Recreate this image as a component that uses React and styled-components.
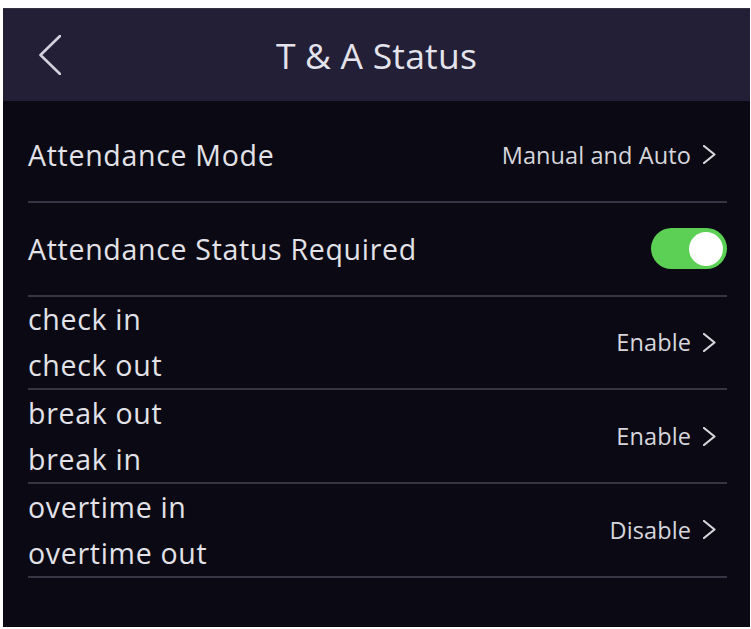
import React from "react";
import styled, { createGlobalStyle } from "styled-components";

const GlobalStyle = createGlobalStyle`
  html, body {
    margin: 0;
    padding: 0;
    background: #ffffff;
  }
  body {
    font-family: "Open Sans", "Noto Sans", sans-serif;
  }
`;

const Screen = styled.div`
  margin: 8px 1px 0 3px;
  width: 747px;
  height: 619px;
  background: #0b0a14;
  display: flex;
  flex-direction: column;
  overflow: hidden;
`;

const Header = styled.div`
  height: 93px;
  flex-shrink: 0;
  background: #221f36;
  border-top: 1px solid #34323f;
  box-sizing: border-box;
  display: grid;
  grid-template-columns: 1fr auto 1fr;
  align-items: center;
`;

const BackButton = styled.button`
  justify-self: start;
  margin-left: 36px;
  padding: 0;
  border: none;
  background: none;
  display: flex;
  cursor: pointer;
`;

const Title = styled.h1`
  margin: 0;
  font-size: 35.5px;
  font-weight: 400;
  color: #e4e3ec;
  letter-spacing: 0.2px;
`;

const List = styled.div`
  padding: 8px 23px 0 25px;
  display: flex;
  flex-direction: column;
`;

const Row = styled.div`
  height: 91.75px;
  border-bottom: 2px solid #363543;
  display: flex;
  align-items: center;
  justify-content: space-between;
`;

const Labels = styled.div`
  display: flex;
  flex-direction: column;
`;

const Label = styled.span`
  font-size: 28.5px;
  line-height: 46px;
  letter-spacing: 0.7px;
  color: #e2e2e8;
`;

const Value = styled.button`
  display: flex;
  align-items: center;
  gap: 12px;
  margin-right: 11px;
  padding: 0;
  border: none;
  background: none;
  font-family: inherit;
  font-size: 23.5px;
  letter-spacing: 0.1px;
  color: #d6d6dc;
  cursor: pointer;
`;

const Switch = styled.div`
  width: 76px;
  height: 41px;
  border-radius: 21px;
  background: ${(p) => (p.on ? "#5ccf55" : "#55545f")};
  display: flex;
  align-items: center;
  justify-content: ${(p) => (p.on ? "flex-end" : "flex-start")};
  padding: 0 4px;
  box-sizing: border-box;
`;

const Knob = styled.div`
  width: 34px;
  height: 34px;
  border-radius: 50%;
  background: #ffffff;
`;

const Chevron = ({ left, w, h, sw, color }) => (
  <svg width={w} height={h} viewBox={`0 0 ${w} ${h}`} fill="none">
    <path
      d={
        left
          ? `M${w - 1} 1 L1.5 ${h / 2} L${w - 1} ${h - 1}`
          : `M1 1 L${w - 1.5} ${h / 2} L1 ${h - 1}`
      }
      stroke={color}
      strokeWidth={sw}
      strokeLinecap="round"
      strokeLinejoin="round"
    />
  </svg>
);

const rows = [
  { labels: ["Attendance Mode"], value: "Manual and Auto" },
  { labels: ["Attendance Status Required"], toggle: true },
  { labels: ["check in", "check out"], value: "Enable" },
  { labels: ["break out", "break in"], value: "Enable" },
  { labels: ["overtime in", "overtime out"], value: "Disable" },
];

export default function App() {
  return (
    <>
      <GlobalStyle />
      <Screen>
        <Header>
          <BackButton aria-label="Back">
            <Chevron left w={22} h={40} sw={2.6} color="#d2d1dc" />
          </BackButton>
          <Title>T &amp; A Status</Title>
          <div />
        </Header>
        <List>
          {rows.map((r) => (
            <Row key={r.labels[0]}>
              <Labels>
                {r.labels.map((l) => (
                  <Label key={l}>{l}</Label>
                ))}
              </Labels>
              {r.toggle ? (
                <Switch on>
                  <Knob />
                </Switch>
              ) : (
                <Value>
                  {r.value}
                  <Chevron w={13} h={19} sw={2.2} color="#d6d6dc" />
                </Value>
              )}
            </Row>
          ))}
        </List>
      </Screen>
    </>
  );
}
